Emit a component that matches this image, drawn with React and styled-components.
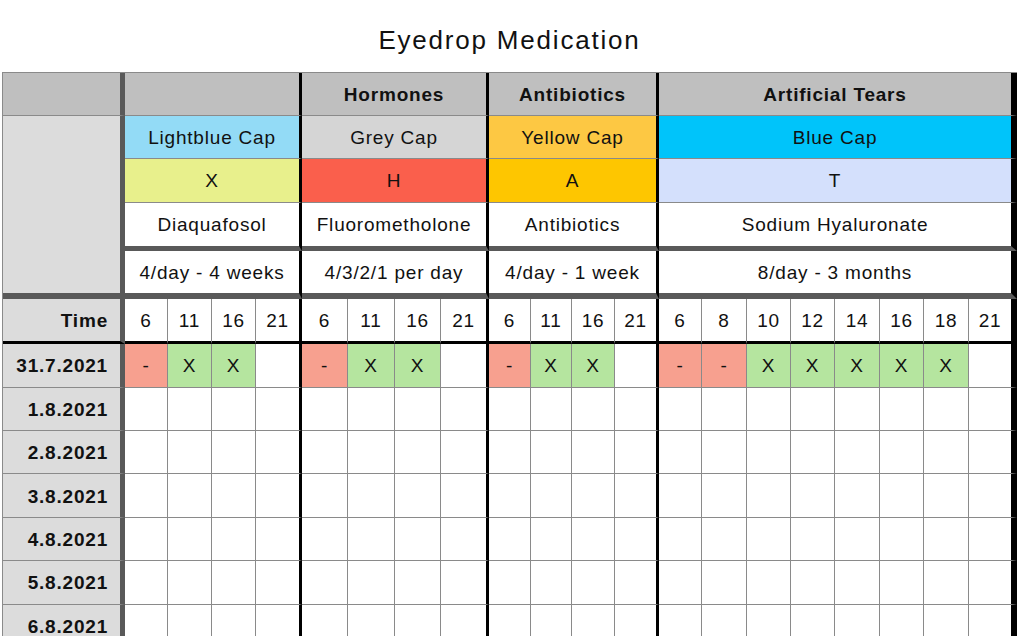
import React from 'react';
import styled, { createGlobalStyle } from 'styled-components';

// Colours picked from the sheet
const thinLine = '#8a8a8a';
const thickGrey = '#595959';
const headerGrey = '#bfbfbf';
const labelGrey = '#dcdcdc';
const missed = '#f7a08f';
const taken = '#b5e59f';

const groups = [
  {
    title: '',
    cap: 'Lightblue Cap',
    capBg: '#93dbf6',
    code: 'X',
    codeBg: '#e8f08c',
    drug: 'Diaquafosol',
    freq: '4/day - 4 weeks',
    times: [6, 11, 16, 21],
    widths: [43, 44, 44, 46],
    first: ['-', 'X', 'X', '']
  },
  {
    title: 'Hormones',
    cap: 'Grey Cap',
    capBg: '#d5d5d5',
    code: 'H',
    codeBg: '#fa5f4c',
    drug: 'Fluorometholone',
    freq: '4/3/2/1 per day',
    times: [6, 11, 16, 21],
    widths: [46, 47, 46, 48],
    first: ['-', 'X', 'X', '']
  },
  {
    title: 'Antibiotics',
    cap: 'Yellow Cap',
    capBg: '#fdc843',
    code: 'A',
    codeBg: '#fec600',
    drug: 'Antibiotics',
    freq: '4/day - 1 week',
    times: [6, 11, 16, 21],
    widths: [42, 41, 43, 44],
    first: ['-', 'X', 'X', '']
  },
  {
    title: 'Artificial Tears',
    cap: 'Blue Cap',
    capBg: '#00c4fa',
    code: 'T',
    codeBg: '#d4e0fc',
    drug: 'Sodium Hyaluronate',
    freq: '8/day - 3 months',
    times: [6, 8, 10, 12, 14, 16, 18, 21],
    widths: [43, 45, 44, 44, 45, 44, 45, 48],
    first: ['-', '-', 'X', 'X', 'X', 'X', 'X', '']
  }
];

const dates = [
  '31.7.2021',
  '1.8.2021',
  '2.8.2021',
  '3.8.2021',
  '4.8.2021',
  '5.8.2021',
  '6.8.2021'
];

const columns = ['122px', ...groups.flatMap(g => g.widths.map(w => `${w}px`))].join(' ');

const rightBorders = {
  thin: `1px solid ${thinLine}`,
  label: `5px solid ${thickGrey}`,
  group: '3px solid #000',
  edge: '6px solid #000'
};

const bottomBorders = {
  thin: `1px solid ${thinLine}`,
  grey5: `5px solid ${thickGrey}`,
  grey6: `6px solid ${thickGrey}`,
  black: '3px solid #000'
};

const GlobalStyle = createGlobalStyle`
  html, body {
    margin: 0;
    padding: 0;
    background: #fff;
    overflow: hidden;
  }
  body {
    font-family: "Liberation Sans", Arial, sans-serif;
    color: #111;
  }
`;

const Page = styled.div`
  width: 1024px;
  height: 636px;
  overflow: hidden;
`;

const Title = styled.h1`
  margin: 0;
  box-sizing: border-box;
  height: 72px;
  padding: 25px 0 0 2px;
  width: 1017px;
  text-align: center;
  font-size: 26px;
  line-height: 30px;
  font-weight: normal;
  letter-spacing: 1.8px;
`;

const Sheet = styled.div`
  display: grid;
  grid-template-columns: ${columns};
  grid-template-rows: 43px 43px 43.5px 48px 48.5px 45.3px repeat(${dates.length}, 43.4px);
  margin-left: 2px;
  width: max-content;
  border-top: 1px solid ${thinLine};
  border-left: 1px solid ${thinLine};
`;

const Cell = styled.div`
  box-sizing: border-box;
  display: flex;
  align-items: center;
  justify-content: ${({ $align }) => ($align === 'right' ? 'flex-end' : 'center')};
  padding: 2px ${({ $align }) => ($align === 'right' ? '12px' : '0')} 0 0;
  grid-column: span ${({ $span }) => $span || 1};
  grid-row: span ${({ $rows }) => $rows || 1};
  background: ${({ $bg }) => $bg || '#fff'};
  border-right: ${({ $right }) => rightBorders[$right || 'thin']};
  border-bottom: ${({ $bottom }) => bottomBorders[$bottom || 'thin']};
  font-size: 19px;
  font-weight: ${({ $bold }) => ($bold ? 'bold' : 'normal')};
  letter-spacing: 0.8px;
  white-space: nowrap;
  overflow: hidden;
`;

const groupEdge = gi => (gi === groups.length - 1 ? 'edge' : 'group');

const slotEdge = (gi, ti) =>
  ti === groups[gi].times.length - 1 ? groupEdge(gi) : 'thin';

const markBg = mark => (mark === '-' ? missed : mark === 'X' ? taken : '#fff');

const HeaderRow = ({ field, bg, bold, bottom }) =>
  groups.map((g, gi) => (
    <Cell
      key={`${field}-${gi}`}
      $span={g.times.length}
      $right={groupEdge(gi)}
      $bg={bg ? g[bg] : undefined}
      $bold={bold}
      $bottom={bottom}
    >
      {g[field]}
    </Cell>
  ));

const App = () => (
  <Page>
    <GlobalStyle />
    <Title>Eyedrop Medication</Title>
    <Sheet>
      {/* category row */}
      <Cell $right="label" $bg={headerGrey} />
      {groups.map((g, gi) => (
        <Cell key={`title-${gi}`} $span={g.times.length} $right={groupEdge(gi)} $bg={headerGrey} $bold>
          {g.title}
        </Cell>
      ))}

      {/* cap colour, code, drug name, frequency */}
      <Cell $rows={4} $right="label" $bg={labelGrey} $bottom="grey6" />
      {HeaderRow({ field: 'cap', bg: 'capBg' })}
      {HeaderRow({ field: 'code', bg: 'codeBg' })}
      {HeaderRow({ field: 'drug', bottom: 'grey5' })}
      {HeaderRow({ field: 'freq', bottom: 'grey6' })}

      {/* dose times */}
      <Cell $right="label" $bg={labelGrey} $bottom="black" $align="right" $bold>
        Time
      </Cell>
      {groups.map((g, gi) =>
        g.times.map((t, ti) => (
          <Cell key={`time-${gi}-${ti}`} $right={slotEdge(gi, ti)} $bottom="black">
            {t}
          </Cell>
        ))
      )}

      {/* daily log */}
      {dates.map((d, di) => (
        <React.Fragment key={d}>
          <Cell $right="label" $bg={labelGrey} $align="right" $bold>
            {d}
          </Cell>
          {groups.map((g, gi) =>
            g.times.map((t, ti) => {
              const mark = di === 0 ? g.first[ti] : '';
              return (
                <Cell key={`${d}-${gi}-${ti}`} $right={slotEdge(gi, ti)} $bg={markBg(mark)}>
                  {mark}
                </Cell>
              );
            })
          )}
        </React.Fragment>
      ))}
    </Sheet>
  </Page>
);

export default App;
